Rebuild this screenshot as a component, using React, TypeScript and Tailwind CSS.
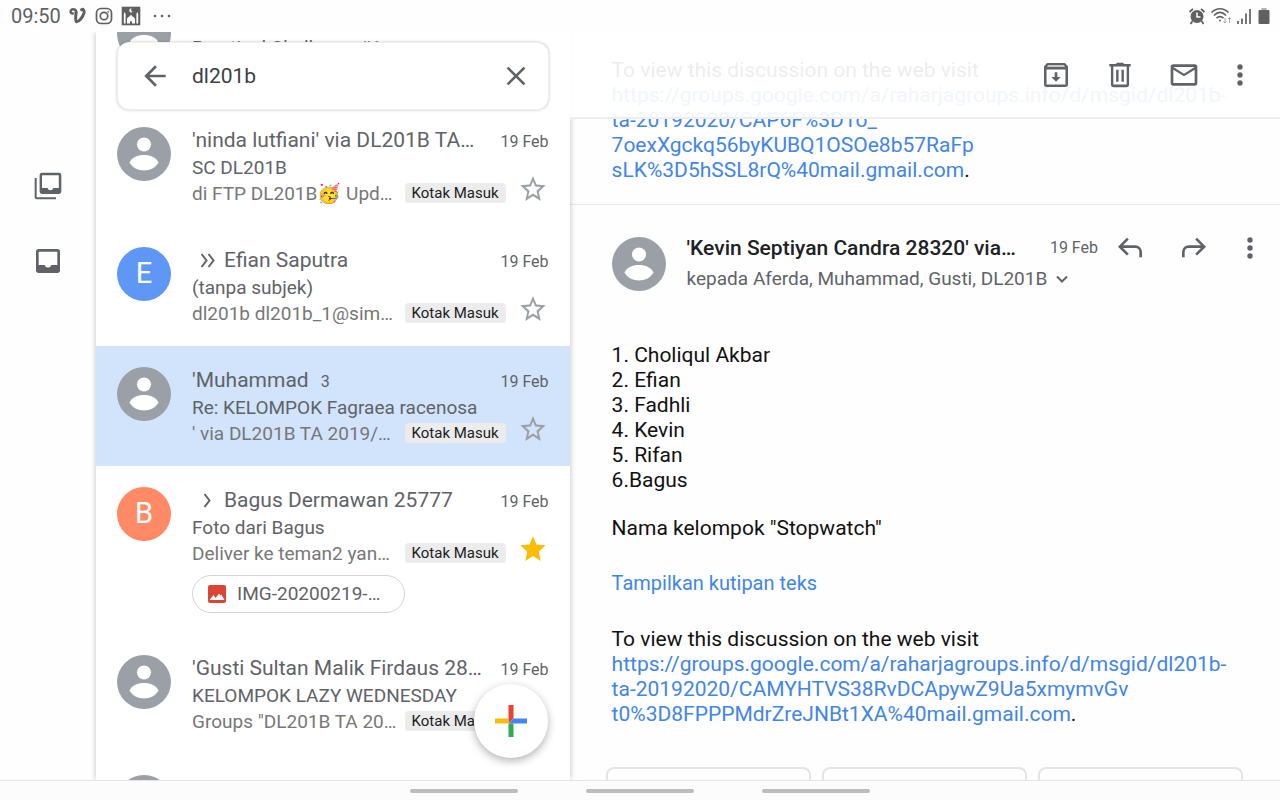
import type { ReactNode } from "react";

type Mail = {
  sender: string;
  subject: string;
  snippet: string;
  count?: number;
  initial?: string;
  marker?: "single" | "double";
  starred?: boolean;
  selected?: boolean;
  attachment?: string;
};

const MAILS: Mail[] = [
  {
    sender: "'ninda lutfiani'",
    subject: "Practical Challenge #1",
    snippet: "di FTP DL201B",
  },
  {
    sender: "'ninda lutfiani' via DL201B TA…",
    subject: "SC DL201B",
    snippet: "di FTP DL201B🥳 Upd…",
  },
  {
    sender: "Efian Saputra",
    subject: "(tanpa subjek)",
    snippet: "dl201b dl201b_1@sim…",
    initial: "E",
    marker: "double",
  },
  {
    sender: "'Muhammad",
    subject: "Re: KELOMPOK Fagraea racenosa",
    snippet: "' via DL201B TA 2019/…",
    count: 3,
    selected: true,
  },
  {
    sender: "Bagus Dermawan 25777",
    subject: "Foto dari Bagus",
    snippet: "Deliver ke teman2 yan…",
    initial: "B",
    marker: "single",
    starred: true,
    attachment: "IMG-20200219-…",
  },
  {
    sender: "'Gusti Sultan Malik Firdaus 28…",
    subject: "KELOMPOK LAZY WEDNESDAY",
    snippet: "Groups \"DL201B TA 20…",
  },
  {
    sender: "'abdul manan 28316' via DL…",
    subject: "Kelompok",
    snippet: "Kelompok DL201B",
  },
];

const MEMBERS = ["1. Choliqul Akbar", "2. Efian", "3. Fadhli", "4. Kevin", "5. Rifan", "6.Bagus"];

function Icon({ children, className }: { children: ReactNode; className?: string }) {
  return (
    <svg viewBox="0 0 24 24" fill="currentColor" aria-hidden="true" className={`shrink-0 ${className ?? "size-8"}`}>
      {children}
    </svg>
  );
}

function IconButton({ label, children, className }: { label: string; children: ReactNode; className?: string }) {
  return (
    <button
      type="button"
      aria-label={label}
      className={`flex size-8 shrink-0 items-center justify-center text-[#5f6368] ${className ?? ""}`}
    >
      {children}
    </button>
  );
}

function MoreIcon() {
  return (
    <Icon>
      <circle cx="12" cy="6" r="2" />
      <circle cx="12" cy="12" r="2" />
      <circle cx="12" cy="18" r="2" />
    </Icon>
  );
}

function Avatar({ initial }: { initial?: string }) {
  if (initial) {
    return (
      <div
        className={`flex size-[54px] shrink-0 items-center justify-center rounded-full text-[29px] text-white ${
          initial === "E" ? "bg-[#5e97f6]" : "bg-[#ff8a65]"
        }`}
      >
        {initial}
      </div>
    );
  }

  return (
    <svg viewBox="0 0 54 54" aria-hidden="true" className="size-[54px] shrink-0">
      <circle cx="27" cy="27" r="27" fill="#9aa0a6" />
      <circle cx="27" cy="17.5" r="7" fill="#fff" />
      <path d="M12.5 35.5c2-5 8-7.500 14.500-7.500s12.500 2.500 14.500 7.500c-2.500 5-8.500 8-14.500 8s-12-3-14.500-8Z" fill="#fff" />
    </svg>
  );
}

function StatusBar() {
  return (
    <header className="z-20 flex h-8 shrink-0 items-center justify-between bg-[#fefefe] pr-2 pl-[11px] text-[#606060]">
      <div className="flex items-center gap-2">
        <span className="text-xl">09:50</span>
        <svg viewBox="0 0 18 18" className="h-[18px] w-[18px]" fill="none" stroke="currentColor" strokeLinecap="round" strokeLinejoin="round">
          <path d="M3.800 6.500C.5 6.500 1 2.500 4.300 2.300c2.700-.1 3 1.700 2.900 3.700" strokeWidth="2.400" />
          <path d="M7 5c.1 4-1.200 8.500.4 9.700 2.300.3 6.600-4.700 7.600-8.700.5-2.500-.8-4.300-2.400-3.300" strokeWidth="3" />
        </svg>
        <svg viewBox="0 0 18 18" className="h-[18px] w-[18px]" fill="none" stroke="currentColor" strokeWidth="1.700">
          <rect x="1.500" y="1.500" width="15" height="15" rx="4.500" />
          <circle cx="9" cy="9" r="3.700" />
          <circle cx="13.200" cy="4.800" r=".6" fill="currentColor" strokeWidth=".6" />
        </svg>
        <svg viewBox="0 0 20 20" className="size-5">
          <path d="M.7.7h18.600v18.600H.7z" fill="currentColor" />
          <path d="M2.800 17.500h1.800V8l-.9-2-.9 2ZM17.200 17.500h-1.800V8l.9-2 .9 2Z" fill="#fff" />
          <path d="M6 17.500v-4c0-2.500 3-2.500 4-5 1 2.500 4 2.500 4 5v4h-3v-1.500a1 1 0 0 0-2 0v1.500Z" fill="#fff" />
          <path d="M10.800 2.500a2 2 0 1 0 1 3.200 1.800 1.800 0 0 1-1-3.200Z" fill="#fff" />
        </svg>
        <svg viewBox="0 0 18 4" className="ml-1 h-1 w-[18px]" fill="currentColor">
          <circle cx="2" cy="2" r="1.300" />
          <circle cx="9" cy="2" r="1.300" />
          <circle cx="16" cy="2" r="1.300" />
        </svg>
      </div>
      <div className="flex items-center gap-1">
        <svg viewBox="0 0 18 18" className="size-[18px]" fill="none" stroke="currentColor" strokeWidth="1.800">
          <circle cx="9" cy="9.500" r="6.500" fill="currentColor" stroke="none" />
          <path d="M1.500 5 5 1.800M16.500 5 13 1.800M4.500 14 2.500 17M13.500 14l2 3" />
          <path d="M9 5.500v4.500h3.500" stroke="#fff" strokeWidth="1.500" />
        </svg>
        <svg viewBox="0 0 22 18" className="h-[18px] w-[22px]" fill="none" stroke="currentColor" strokeWidth="1.700">
          <path d="M1.500 5.500c5-5 12-5 17 0M4 8.500c4-4 8-4 12 0M6.500 11.200c2.500-2.200 4.500-2.200 7 0" />
          <circle cx="10" cy="13.500" r="1" fill="currentColor" stroke="none" />
          <path d="M15 11v5m-1.500-1.500L15 16l1.500-1.500M19.500 16v-5.500M18 12l1.500-1.500L21 12" stroke="#aaa" strokeWidth="1" />
        </svg>
        <svg viewBox="0 0 16 18" className="h-[18px] w-4" stroke="currentColor" strokeWidth="1.700">
          <path d="M2 17v-3M6 17v-5.500M10 17V6.500M14 17V2" />
        </svg>
        <svg viewBox="0 0 16 18" className="h-[18px] w-4" fill="currentColor">
          <path d="M5.500 1h5v2.500h-5z" opacity=".5" />
          <rect x="2.500" y="3" width="11" height="14" rx="1" />
        </svg>
      </div>
    </header>
  );
}

function SideRail() {
  return (
    <nav className="flex w-24 shrink-0 flex-col items-center gap-[43px] pt-[138px]">
      <IconButton label="Semua kotak masuk">
        <Icon>
          <path d="M3.500 6v14.500H18V22H3.500A1.500 1.500 0 0 1 2 20.500V6Z" />
          <path fillRule="evenodd" d="M7.500 2h12.700A1.800 1.800 0 0 1 22 3.800v12.400a1.800 1.800 0 0 1-1.800 1.800H7.500a1.800 1.800 0 0 1-1.800-1.800V3.800A1.800 1.800 0 0 1 7.500 2Zm0 1.900v9.600h4.200a2.200 2.200 0 0 0 4.300 0h4.100V3.900Z" />
        </Icon>
      </IconButton>
      <IconButton label="Kotak masuk">
        <Icon>
          <path fillRule="evenodd" d="M5 3h14a2 2 0 0 1 2 2v14a2 2 0 0 1-2 2H5a2 2 0 0 1-2-2V5a2 2 0 0 1 2-2Zm0 2v10h4.500a2.600 2.600 0 0 0 5 0H19V5Z" />
        </Icon>
      </IconButton>
    </nav>
  );
}

function SearchBar() {
  return (
    <div className="absolute inset-x-[21px] top-[10px] z-10 flex h-[68px] items-center rounded-xl border border-[#eeeeee] bg-white pr-4 pl-[21px] shadow-[0_0_3px_rgba(60,64,67,0.3)]">
      <IconButton label="Kembali">
        <Icon>
          <path d="M20 11H7.800l5.600-5.600L12 4l-8 8 8 8 1.400-1.400L7.800 13H20z" />
        </Icon>
      </IconButton>
      <input
        aria-label="Telusuri email"
        defaultValue="dl201b"
        className="ml-[21px] h-8 min-w-0 flex-1 bg-transparent text-[21px] text-[#3c4043] outline-none"
      />
      <IconButton label="Hapus">
        <Icon>
          <path d="M19 6.400 17.600 5 12 10.600 6.400 5 5 6.400l5.600 5.600L5 17.600 6.400 19l5.600-5.600 5.600 5.600 1.400-1.400-5.600-5.600z" />
        </Icon>
      </IconButton>
    </div>
  );
}

function MailRow({ mail }: { mail: Mail }) {
  return (
    <li
      className={`flex shrink-0 gap-[21px] px-[21px] pt-[21px] ${mail.attachment ? "h-[168px]" : "h-[120px]"} ${
        mail.selected ? "bg-[#d2e3fc]" : ""
      }`}
    >
      <Avatar initial={mail.initial} />
      <div className="min-w-0 flex-1">
        <div className="flex h-7 items-baseline leading-[26px]">
          {mail.marker ? (
            <svg viewBox="0 0 32 28" aria-hidden="true" className="h-7 w-8 shrink-0 self-center" fill="none" stroke="#5f6368" strokeWidth="2">
              {mail.marker === "double" ? (
                <path d="m9.500 7 5 6.500-5 6.500M16.500 7l5 6.500-5 6.500" />
              ) : (
                <path d="m12.500 7 5 6.500-5 6.500" />
              )}
            </svg>
          ) : null}
          <span className="whitespace-nowrap text-[21px] leading-[26px] text-[#5f6368]">{mail.sender}</span>
          {mail.count ? <span className="ml-3 text-base leading-[26px] text-[#5f6368]">{mail.count}</span> : null}
          <time className="ml-auto shrink-0 text-base leading-[26px] text-[#5f6368]">19 Feb</time>
        </div>
        <div className="truncate text-[19px] leading-[26px] text-[#5f6368]">{mail.subject}</div>
        <div className="flex h-[26px] items-start">
          <span className="flex-1 whitespace-nowrap text-[19px] leading-[26px] text-[#777777]">{mail.snippet}</span>
          <span className="mt-0.5 shrink-0 rounded bg-[#ececec] px-[7px] text-[15px] leading-5 text-[#202124]">
            Kotak Masuk
          </span>
          <IconButton label={mail.starred ? "Hapus bintang" : "Beri bintang"} className="-mt-2 ml-[11px]">
            {mail.starred ? (
              <Icon className="size-8 text-[#fbbc04]">
                <path d="m12 17.300 5.800 3.700-1.500-7L21.500 9.200l-6.900-.6L12 2.500 9.400 8.600l-6.900.6L7.700 14l-1.500 7z" />
              </Icon>
            ) : (
              <Icon className="size-8 text-[#9aa0a6]">
                <path d="m21.500 9.200-6.900-.6L12 2.200 9.400 8.600l-6.900.6L7.700 14l-1.500 7 5.800-3.700 5.800 3.700-1.500-7zM12 15.400l-3.600 2.300 1-4.300-3.300-2.900 4.300-.4L12 6.100l1.600 4 4.300.4-3.300 2.900 1 4.300z" />
              </Icon>
            )}
          </IconButton>
        </div>
        {mail.attachment ? (
          <button
            type="button"
            className="mt-2 flex h-[38px] w-[213px] items-center gap-2 rounded-full border border-[#d2d4d8] pr-6 pl-3 text-[19px] text-[#5f6368]"
          >
            <Icon className="size-6 text-[#db4437]">
              <path d="M21 19V5a2 2 0 0 0-2-2H5a2 2 0 0 0-2 2v14a2 2 0 0 0 2 2h14a2 2 0 0 0 2-2ZM8.500 13l2.200 3 3.300-4.500 1.500 2 .8-1L19.500 18h-15z" />
            </Icon>
            <span className="whitespace-nowrap">{mail.attachment}</span>
          </button>
        ) : null}
      </div>
    </li>
  );
}

function MailList() {
  return (
    <section className="relative z-10 w-[37%] shrink-0 overflow-hidden bg-white shadow-[0_0_6px_rgba(0,0,0,0.25)]">
      <SearchBar />
      <ul className="-mt-[46px] flex flex-col">
        {MAILS.map((mail) => (
          <MailRow key={mail.subject} mail={mail} />
        ))}
      </ul>
      <button
        type="button"
        aria-label="Tulis"
        className="absolute right-[22px] bottom-[22px] flex size-[74px] items-center justify-center rounded-full bg-white shadow-[0_3px_8px_rgba(0,0,0,0.3)]"
      >
        <svg viewBox="0 0 32 32" aria-hidden="true" className="size-8">
          <path d="M13.500 0h5v13.500l-5 5z" fill="#ea4335" />
          <path d="M0 13.500h13.500v5H0z" fill="#fbbc04" />
          <path d="M18.500 13.500H32v5H13.500z" fill="#4285f4" />
          <path d="M13.500 18.500h5V32h-5z" fill="#34a853" />
        </svg>
      </button>
    </section>
  );
}

function Toolbar() {
  return (
    <div className="absolute inset-x-0 top-0 z-10 flex h-[87px] items-center justify-end gap-8 border-b-2 border-[#eeeeee] bg-white/92 pr-6">
      <IconButton label="Arsipkan">
        <Icon>
          <path d="M6 4h12l1.700 2H4.300z" opacity=".35" />
          <path fillRule="evenodd" d="M5.800 3h12.400c.5 0 .8.200 1.100.5l1.300 1.600c.3.400.4.700.4 1.200V19a2 2 0 0 1-2 2H5a2 2 0 0 1-2-2V6.300c0-.5.100-.8.400-1.200l1.300-1.600c.3-.3.600-.5 1.100-.5Zm.4 1.500L5.100 6h13.800l-1.100-1.500ZM4.900 7.900v11.200h14.200V7.900Z" />
          <path d="M11 10h2v3.500h2.500L12 17l-3.500-3.500H11z" />
        </Icon>
      </IconButton>
      <IconButton label="Hapus email">
        <Icon>
          <path fillRule="evenodd" d="M9.300 2.800h5.400v1H20v1.900h-1.200v13.500a1.900 1.900 0 0 1-1.900 1.900H7.100a1.900 1.900 0 0 1-1.900-1.900V5.700H4V3.800h5.300ZM7 5.700v13.500h10V5.700ZM9.100 8h1.800v9H9.100Zm4 0h1.800v9h-1.800Z" />
        </Icon>
      </IconButton>
      <IconButton label="Tandai belum dibaca">
        <Icon>
          <path fillRule="evenodd" d="M4 4h16a2 2 0 0 1 2 2v12a2 2 0 0 1-2 2H4a2 2 0 0 1-2-2V6a2 2 0 0 1 2-2Zm0 4v10h16V8l-8 5Zm0-2 8 5 8-5Z" />
        </Icon>
      </IconButton>
      <IconButton label="Opsi lainnya" className="-ml-2">
        <MoreIcon />
      </IconButton>
    </div>
  );
}

function MessageHeader() {
  return (
    <div className="flex items-start border-t border-[#ebebeb] pt-[29px] pr-[14px] pl-[42px]">
      <div className="pt-[3px]">
        <Avatar />
      </div>
      <div className="ml-[21px] min-w-0 flex-1">
        <div className="flex h-7 items-center">
          <h2 className="whitespace-nowrap text-[21px] font-medium text-[#202124]">
            'Kevin Septiyan Candra 28320' via…
          </h2>
          <time className="mr-4 ml-auto shrink-0 text-base text-[#5f6368]">19 Feb</time>
          <div className="flex items-center gap-8">
            <IconButton label="Balas">
              <Icon>
                <path d="m9.700 4.300 1.400 1.400L6.800 10H16a5 5 0 0 1 5 5v4h-2v-4a3 3 0 0 0-3-3H6.800l4.300 4.300-1.400 1.400L3 11z" />
              </Icon>
            </IconButton>
            <IconButton label="Teruskan">
              <Icon>
                <path d="m14.300 4.300-1.400 1.400 4.300 4.300H8a5 5 0 0 0-5 5v4h2v-4a3 3 0 0 1 3-3h9.200l-4.300 4.300 1.400 1.400L21 11z" />
              </Icon>
            </IconButton>
            <IconButton label="Opsi pesan" className="-ml-2">
              <MoreIcon />
            </IconButton>
          </div>
        </div>
        <button type="button" className="mt-[3px] flex items-center gap-2 text-[19px] leading-7 text-[#5f6368]">
          kepada Aferda, Muhammad, Gusti, DL201B
          <svg viewBox="0 0 14 10" aria-hidden="true" className="h-[10px] w-[14px]" fill="none" stroke="currentColor" strokeWidth="2">
            <path d="m2 2.500 5 5 5-5" />
          </svg>
        </button>
      </div>
    </div>
  );
}

function Conversation() {
  return (
    <main className="relative min-w-0 flex-1 overflow-hidden text-[21px] leading-[25px] text-[#111111]">
      <Toolbar />
      <div className="px-[42px] pt-[26px] pb-[21px]">
        <p>To view this discussion on the web visit</p>
        <a href="#first" className="text-[#4285e8]">
          https://groups.google.com/a/raharjagroups.info/d/msgid/dl201b-
          <br />
          ta-20192020/CAP6F%3D1o_
          <br />
          7oexXgckq56byKUBQ1OSOe8b57RaFp
          <br />
          sLK%3D5hSSL8rQ%40mail.gmail.com
        </a>
        .
      </div>
      <MessageHeader />
      <div className="px-[42px] pt-[50px]">
        {MEMBERS.map((member) => (
          <p key={member}>{member}</p>
        ))}
        <p className="mt-[23px]">Nama kelompok "Stopwatch"</p>
        <button type="button" className="mt-[30px] block text-[20px] text-[#4285e8]">
          Tampilkan kutipan teks
        </button>
        <p className="mt-[31px]">To view this discussion on the web visit</p>
        <a href="#second" className="text-[#4285e8]">
          https://groups.google.com/a/raharjagroups.info/d/msgid/dl201b-
          <br />
          ta-20192020/CAMYHTVS38RvDCApywZ9Ua5xmymvGv
          <br />
          t0%3D8FPPPMdrZreJNBt1XA%40mail.gmail.com
        </a>
        .
      </div>
      <div className="mt-10 grid grid-cols-3 gap-[11px] pr-[37px] pl-9">
        <button type="button" aria-label="Balas" className="h-12 rounded-lg border-2 border-[#e4e4e4]" />
        <button type="button" aria-label="Balas ke semua" className="h-12 rounded-lg border-2 border-[#e4e4e4]" />
        <button type="button" aria-label="Teruskan" className="h-12 rounded-lg border-2 border-[#e4e4e4]" />
      </div>
    </main>
  );
}

export default function App() {
  return (
    <div className="flex h-screen flex-col overflow-hidden bg-[#fefefe] font-[Roboto,sans-serif]">
      <StatusBar />
      <div className="flex min-h-0 flex-1">
        <SideRail />
        <MailList />
        <Conversation />
      </div>
      <footer className="z-20 flex h-5 shrink-0 items-center justify-center gap-[68px] border-t border-[#e4e4e4] bg-[#fcfcfc]">
        <span className="h-1 w-[108px] rounded-full bg-[#bdbdbd]" />
        <span className="h-1 w-[108px] rounded-full bg-[#bdbdbd]" />
        <span className="h-1 w-[108px] rounded-full bg-[#bdbdbd]" />
      </footer>
    </div>
  );
}
